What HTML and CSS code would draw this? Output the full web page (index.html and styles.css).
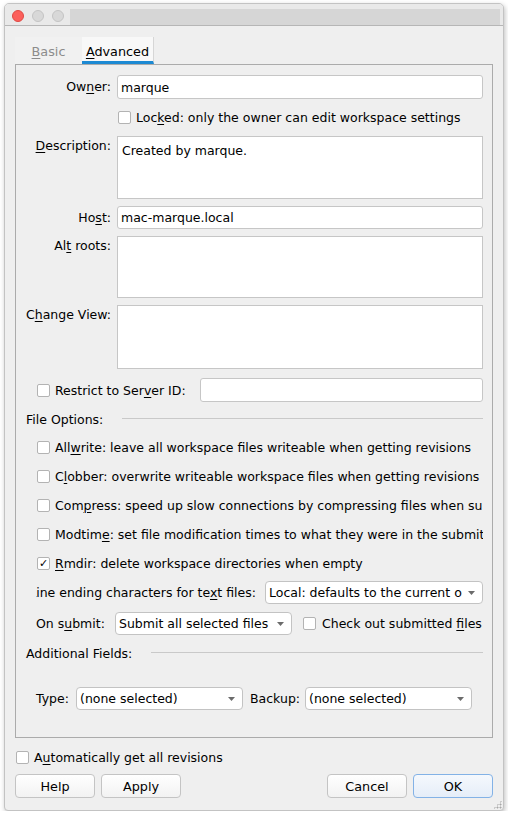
FILE: index.html
```html
<!DOCTYPE html>
<html lang="en">
<head>
  <meta charset="UTF-8">
  <title>Workspace</title>
  <link rel="stylesheet" href="styles.css">
</head>
<body>
  <div class="window">
    <div class="titlebar">
      <div class="lights">
        <span class="light close"></span>
        <span class="light"></span>
        <span class="light"></span>
      </div>
      <div class="title-strip"></div>
    </div>

    <div class="content">
      <div class="tabs">
        <div class="tab"><u>B</u>asic</div>
        <div class="tab active"><u>A</u>dvanced</div>
      </div>

      <div class="panel">
        <div class="row h24">
          <label class="label">Ow<u>n</u>er:</label>
          <input class="field" value="marque">
        </div>
        <div class="row locked">
          <span class="check"></span>
          <span>Loc<u>k</u>ed: only the owner can edit workspace settings</span>
        </div>
        <div class="row tall">
          <label class="label"><u>D</u>escription:</label>
          <textarea class="area h63">Created by marque.</textarea>
        </div>
        <div class="row">
          <label class="label">Ho<u>s</u>t:</label>
          <input class="field" value="mac-marque.local">
        </div>
        <div class="row tall">
          <label class="label">Al<u>t</u> roots:</label>
          <textarea class="area h62"></textarea>
        </div>
        <div class="row tall">
          <label class="label">C<u>h</u>ange View:</label>
          <textarea class="area h64"></textarea>
        </div>
        <div class="row h24 indent restrict">
          <span class="check"></span>
          <span>Restrict to Ser<u>v</u>er ID:</span>
          <input class="field server" value="">
        </div>
        <div class="group-title">File Options:</div>
        <div class="row opt indent">
          <span class="check"></span>
          <span>All<u>w</u>rite: leave all workspace files writeable when getting revisions</span>
        </div>
        <div class="row opt indent">
          <span class="check"></span>
          <span>C<u>l</u>obber: overwrite writeable workspace files when getting revisions</span>
        </div>
        <div class="row opt indent">
          <span class="check"></span>
          <span>Com<u>p</u>ress: speed up slow connections by compressing files when submitting</span>
        </div>
        <div class="row opt indent">
          <span class="check"></span>
          <span>Modtim<u>e</u>: set file modification times to what they were in the submitted revision</span>
        </div>
        <div class="row opt indent">
          <span class="check">✓</span>
          <span><u>R</u>mdir: delete workspace directories when empty</span>
        </div>
        <div class="row pad">
          <div class="clip-label"><span>Line ending characters for te<u>x</u>t files:</span></div>
          <div class="select grow">
            <span class="select-text">Local: defaults to the current operating system</span>
            <svg width="7" height="4" viewBox="0 0 7 4"><path d="M0 0h7L3.5 4z" fill="#6b6b6b"/></svg>
          </div>
        </div>
        <div class="row pad plus1">
          <span class="submit-label">On s<u>u</u>bmit:</span>
          <div class="select submit-select">
            <span class="select-text">Submit all selected files</span>
            <svg width="7" height="4" viewBox="0 0 7 4"><path d="M0 0h7L3.5 4z" fill="#6b6b6b"/></svg>
          </div>
          <span class="check checkout"></span>
          <span>Check out submitted <u>f</u>iles</span>
        </div>
        <div class="group-title plus1 additional">Additional Fields:</div>
        <div class="row pad type-row">
          <span class="type-label">Type:</span>
          <div class="select small">
            <span class="select-text">(none selected)</span>
            <svg width="7" height="4" viewBox="0 0 7 4"><path d="M0 0h7L3.5 4z" fill="#6b6b6b"/></svg>
          </div>
          <span class="backup-label">Backup:</span>
          <div class="select small">
            <span class="select-text">(none selected)</span>
            <svg width="7" height="4" viewBox="0 0 7 4"><path d="M0 0h7L3.5 4z" fill="#6b6b6b"/></svg>
          </div>
        </div>
      </div>

      <div class="row auto-row">
        <span class="check"></span>
        <span>A<u>u</u>tomatically get all revisions</span>
      </div>

      <div class="buttons">
        <button class="btn">Help</button>
        <button class="btn">Apply</button>
        <div class="spacer"></div>
        <button class="btn">Cancel</button>
        <button class="btn default">OK</button>
      </div>
    </div>
  </div>
</body>
</html>
```

FILE: styles.css
```css
body {
  margin: 0;
  background: #ffffff;
  font-family: "DejaVu Sans", sans-serif;
  font-size: 12.5px;
  color: #000;
}

u {
  text-decoration-thickness: 1px;
  text-underline-offset: 2px;
}

.window {
  position: relative;
  box-sizing: border-box;
  width: 500px;
  height: 808px;
  margin: 3px 0 0 4px;
  background: #efefef;
  border: 1px solid #c3c3c3;
  border-radius: 5px 5px 4px 4px;
  box-shadow: 1px 2px 5px rgba(0,0,0,0.25);
  overflow: hidden;
}

/* resize grip */
.window::after {
  content: "";
  position: absolute;
  right: 1px;
  bottom: 1px;
  width: 9px;
  height: 9px;
  background: radial-gradient(circle, #a8a8a8 0.8px, transparent 1.2px) 0 0 / 3px 3px;
  clip-path: polygon(100% 0, 100% 100%, 0 100%);
}

.titlebar {
  display: flex;
  height: 21px;
  padding-left: 7px;
  background: #e9e9e9;
  border-bottom: 1px solid #b6b6b6;
}

.lights {
  display: flex;
  gap: 8px;
  padding-top: 6px;
}

.light {
  width: 12px;
  height: 12px;
  box-sizing: border-box;
  border-radius: 50%;
  background: #d8d8d8;
  border: 1px solid #c4c4c4;
}

.light.close {
  background: #fc605c;
  border-color: #df4944;
}

.title-strip {
  flex: 1;
  align-self: flex-end;
  height: 16px;
  margin: 0 3px 0 6px;
  background: #d6d6d6;
}

.content {
  padding: 11px 10px 10px;
}

.tabs {
  display: flex;
  height: 27px;
}

.tab {
  box-sizing: border-box;
  width: 67px;
  height: 27px;
  padding-top: 6px;
  line-height: 17px;
  text-align: center;
  font-size: 12.8px;
  color: #8c8c8c;
  background: #f1f1f1;
}

.tab.active {
  width: 72px;
  color: #000;
  background: #f8f8f8;
  border-bottom: 3px solid #1d8ad3;
  border-right: 1px solid #d6d6d6;
}

.panel {
  display: flex;
  flex-direction: column;
  gap: 7px;
  padding: 10px 9px 27px 10px;
  border: 1px solid #ababab;
}

.row {
  display: flex;
  align-items: center;
  height: 23px;
  white-space: nowrap;
  overflow: hidden;
}

.row.h24 {
  height: 24px;
}

.row.tall {
  align-items: flex-start;
  height: auto;
}

.label {
  flex: none;
  width: 85px;
  margin-right: 6px;
  padding-top: 1px;
  text-align: right;
  line-height: 18px;
}

.row:not(.tall) .label {
  padding-top: 0;
}

.field {
  flex: 1;
  min-width: 0;
  box-sizing: border-box;
  height: 100%;
  padding: 0 3px;
  border: 1px solid #c6c6c6;
  border-radius: 3px;
  background: #fff;
  font: inherit;
  color: #000;
  outline: none;
}

.area {
  flex: 1;
  box-sizing: border-box;
  padding: 5px 4px;
  border: 1px solid #c6c6c6;
  background: #fff;
  font: inherit;
  line-height: 17px;
  color: #000;
  resize: none;
  outline: none;
}

.area.h62 { height: 62px; }
.area.h63 { height: 63px; }
.area.h64 { height: 64px; }

.check {
  flex: none;
  display: flex;
  align-items: center;
  justify-content: center;
  box-sizing: border-box;
  width: 13px;
  height: 13px;
  margin-right: 5px;
  border: 1px solid #b3b3b3;
  border-radius: 2px;
  background: #fff;
  font-size: 11px;
  line-height: 1;
}

.locked {
  padding-left: 92px;
}

.indent {
  padding-left: 11px;
}

.pad {
  padding-left: 10px;
}

.restrict {
  margin-top: 2px;
}

.field.server {
  margin-left: 14px;
}

.opt {
  height: 22px;
}

.plus1 {
  margin-top: 1px;
}

.group-title {
  display: flex;
  align-items: center;
  height: 20px;
  white-space: nowrap;
}

.group-title::after {
  content: "";
  flex: 1;
  height: 1px;
  margin: -2px 0 0 19px;
  background: #c9c9c9;
}

.clip-label {
  flex: none;
  display: flex;
  justify-content: flex-end;
  width: 220px;
  margin-right: 9px;
  overflow: hidden;
}

.clip-label span {
  flex: none;
}

.select {
  display: flex;
  align-items: center;
  box-sizing: border-box;
  height: 23px;
  padding: 0 7px 0 3px;
  border: 1px solid #c3c3c3;
  border-radius: 4px;
  background: #fff;
}

.select.grow {
  flex: 1;
  min-width: 0;
}

.select-text {
  flex: 1;
  overflow: hidden;
}

.select svg {
  flex: none;
  margin-left: 6px;
}

.submit-label {
  flex: none;
  width: 79px;
}

.submit-select {
  flex: none;
  width: 177px;
}

.check.checkout {
  margin: 0 6px 0 11px;
}

.additional {
  margin-top: 1px;
}

.type-row {
  margin-top: 17px;
}

.type-label {
  flex: none;
  width: 40px;
}

.select.small {
  flex: none;
  width: 167px;
}

.backup-label {
  flex: none;
  width: 55px;
  margin-left: 7px;
}

.auto-row {
  height: 20px;
  margin-top: 9px;
  padding-left: 1px;
}

.buttons {
  display: flex;
  gap: 6px;
  margin-top: 7px;
}

.spacer {
  flex: 1;
}

.btn {
  box-sizing: border-box;
  width: 80px;
  height: 24px;
  padding: 0;
  border: 1px solid #c4c4c4;
  border-radius: 4px;
  background: linear-gradient(#ffffff, #f2f2f2);
  font: inherit;
  font-size: 12.8px;
  color: #000;
}

.btn.default {
  border-color: #83b2e6;
  background: linear-gradient(#f5f8fd, #e5edf8);
}
```
